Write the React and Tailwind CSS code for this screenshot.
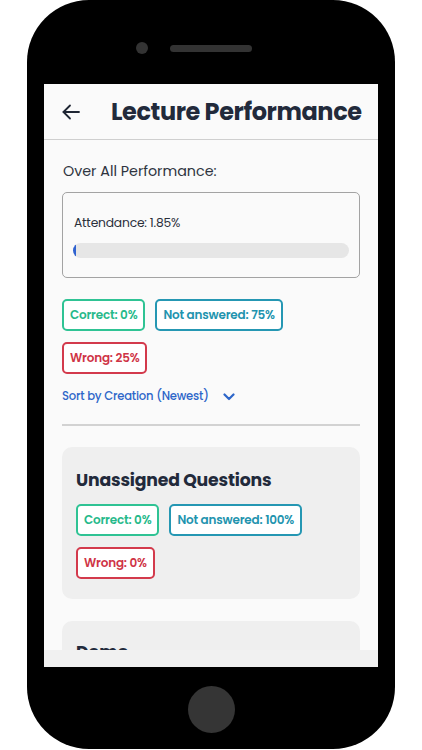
import React from "react";

const font = { fontFamily: "Poppins, Inter, 'Noto Sans', sans-serif" };

const Badge = ({ tone, children }) => {
  const tones = {
    green: "border-[#2fc394] text-[#25b98a]",
    teal: "border-[#2597b3] text-[#2293ae]",
    red: "border-[#d33a4c] text-[#cf3446]",
  };
  return (
    <span
      className={`inline-flex items-center h-[32px] px-[6px] bg-white border-2 rounded-[5px] text-[12px] font-semibold leading-[18px] tracking-[-0.2px] ${tones[tone]}`}
    >
      {children}
    </span>
  );
};

const BadgeGroup = ({ correct, notAnswered, wrong }) => (
  <div className="flex flex-col gap-[11px]">
    <div className="flex gap-[10px]">
      <Badge tone="green">Correct: {correct}</Badge>
      <Badge tone="teal">Not answered: {notAnswered}</Badge>
    </div>
    <div className="flex">
      <Badge tone="red">Wrong: {wrong}</Badge>
    </div>
  </div>
);

const ArrowLeft = () => (
  <svg width="18" height="16" viewBox="0 0 18 16" fill="none" stroke="#1f2633" strokeWidth="1.8" strokeLinecap="round" strokeLinejoin="round">
    <path d="M17 8H1.5" />
    <path d="M8 1.5L1.5 8L8 14.5" />
  </svg>
);

const Chevron = () => (
  <svg width="12" height="8" viewBox="0 0 12 8" fill="none" stroke="#2d66c9" strokeWidth="2.2" strokeLinecap="round" strokeLinejoin="round">
    <path d="M1.5 1.5L6 6L10.5 1.5" />
  </svg>
);

export default function App() {
  return (
    <div className="w-[422px] h-[750px] bg-white pl-[27px]" style={font}>
      <div className="w-[368px] h-[749px] bg-black rounded-[62px] flex flex-col items-center">
        {/* top bezel */}
        <div className="h-[84px] w-full flex items-start justify-center pt-[42px]">
          <div className="flex items-center gap-[22px]">
            <div className="w-[12px] h-[12px] rounded-full bg-[#333]" />
            <div className="w-[82px] h-[7px] rounded-full bg-[#333]" />
            <div className="w-[12px]" />
          </div>
        </div>

        {/* screen */}
        <div className="w-[334px] h-[583px] bg-[#fafafa] flex flex-col overflow-hidden">
          <div className="h-[56px] shrink-0 flex items-center pl-[18px] border-b border-[#cfcfcf]">
            <ArrowLeft />
            <h1 className="ml-[31px] text-[24px] font-bold text-[#222a3b] tracking-[-0.4px] leading-none">
              Lecture Performance
            </h1>
          </div>

          <div className="flex-1 overflow-hidden px-[18px] pt-[20px]">
            <p className="text-[14.3px] leading-[22px] text-[#2e3440] pl-[1px]">Over All Performance:</p>

            <div className="mt-[10px] h-[86px] border border-[#a3a3a3] rounded-[5px] px-[10px] pt-[21px]">
              <p className="pl-[1px] text-[12.3px] leading-[18px] text-[#2a2f3a] tracking-[-0.2px]">Attendance: 1.85%</p>
              <div className="mt-[11px] h-[15px] rounded-full bg-[#e6e6e6] overflow-hidden">
                <div className="h-full w-[3px] bg-[#2f62d0] rounded-l-[2px]" />
              </div>
            </div>

            <div className="mt-[21px]">
              <BadgeGroup correct="0%" notAnswered="75%" wrong="25%" />
            </div>

            <div className="mt-[14px] flex items-center h-[18px]">
              <span className="text-[11.6px] font-medium text-[#2d66c9] tracking-[-0.2px]">Sort by Creation (Newest)</span>
              <span className="ml-[14px] flex items-center"><Chevron /></span>
            </div>

            <div className="mt-[18px] h-[2px] bg-[#d2d2d2]" />

            <div className="mt-[21px] bg-[#efefef] rounded-[10px] px-[14px] pt-[20px] pb-[20px]">
              <h2 className="text-[17.3px] leading-[26px] font-bold text-[#222a3b] tracking-[-0.2px]">Unassigned Questions</h2>
              <div className="mt-[11px]">
                <BadgeGroup correct="0%" notAnswered="100%" wrong="0%" />
              </div>
            </div>

            <div className="mt-[22px] bg-[#efefef] rounded-[10px] px-[14px] pt-[18px] pb-[20px]">
              <h2 className="text-[17.3px] leading-[26px] font-bold text-[#222a3b]">Demo</h2>
            </div>
          </div>

          <div className="h-[17px] shrink-0 bg-[#f1f1f1]" />
        </div>

        {/* bottom bezel */}
        <div className="flex-1 w-full flex items-start justify-center pt-[19px]">
          <div className="w-[47px] h-[47px] rounded-full bg-[#353535]" />
        </div>
      </div>
    </div>
  );
}
